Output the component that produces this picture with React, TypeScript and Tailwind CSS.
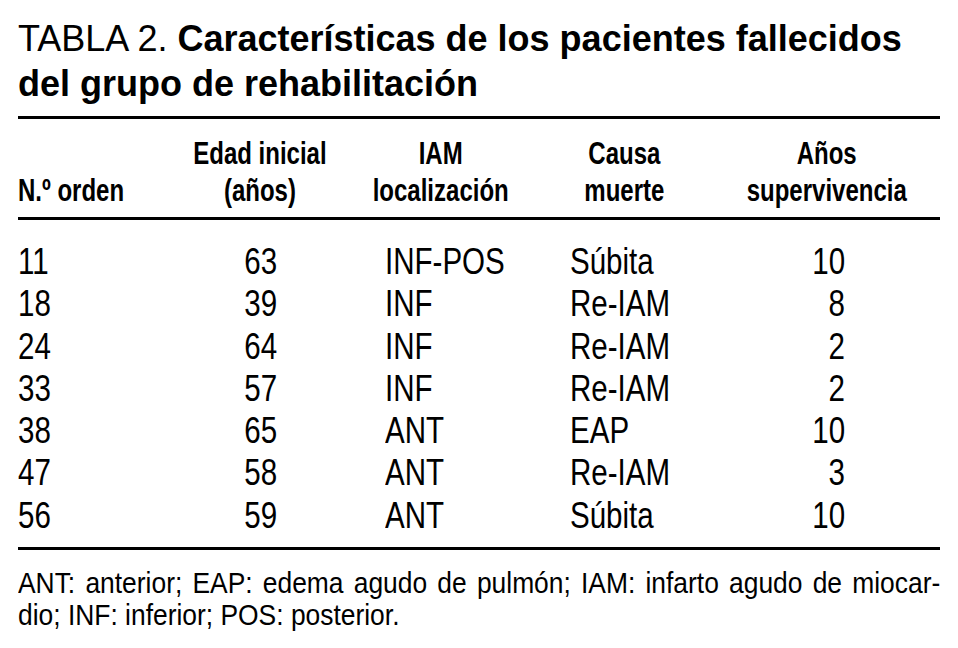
import React from 'react'

interface Row {
  orden: string
  edad: string
  iam: string
  causa: string
  anos: string
}

const rows: Row[] = [
  { orden: '11', edad: '63', iam: 'INF-POS', causa: 'Súbita', anos: '10' },
  { orden: '18', edad: '39', iam: 'INF', causa: 'Re-IAM', anos: '8' },
  { orden: '24', edad: '64', iam: 'INF', causa: 'Re-IAM', anos: '2' },
  { orden: '33', edad: '57', iam: 'INF', causa: 'Re-IAM', anos: '2' },
  { orden: '38', edad: '65', iam: 'ANT', causa: 'EAP', anos: '10' },
  { orden: '47', edad: '58', iam: 'ANT', causa: 'Re-IAM', anos: '3' },
  { orden: '56', edad: '59', iam: 'ANT', causa: 'Súbita', anos: '10' },
]

// condensed look: Liberation Sans squeezed horizontally
const dataTxt = 'inline-block whitespace-nowrap scale-x-[0.82]'
const headTxt = 'w-max text-center whitespace-nowrap origin-center scale-x-[0.75]'

const HeadCell: React.FC<{ className: string; children: React.ReactNode }> = ({ className, children }) => (
  <div className={`flex justify-center ${className}`}>
    <div className={headTxt}>{children}</div>
  </div>
)

const App: React.FC = () => {
  return (
    <div className="w-[958px] h-[648px] bg-white text-black px-[18px] pt-[16px] overflow-hidden font-['Liberation_Sans',Arial,sans-serif]">
      {/* Title */}
      <h1 className="text-[36px] leading-[45px] font-normal">
        TABLA 2. <span className="font-bold">Características de los pacientes fallecidos del grupo de rehabilitación</span>
      </h1>

      <div className="mt-[10px] w-[922px] border-t-[3px] border-black" />

      {/* Header */}
      <div className="font-bold text-[32px] leading-[37px] flex items-end pt-[16px] pb-[8px]">
        <div className="w-[175px]">
          <div className="w-max whitespace-nowrap origin-left scale-x-[0.75]">N.º orden</div>
        </div>
        <HeadCell className="w-[134px]">
          Edad inicial
          <br />
          (años)
        </HeadCell>
        <HeadCell className="ml-[58px] w-[112px]">
          IAM
          <br />
          localización
        </HeadCell>
        <HeadCell className="ml-[73px] w-[108px]">
          Causa
          <br />
          muerte
        </HeadCell>
        <HeadCell className="ml-[70px] w-[158px]">
          Años
          <br />
          supervivencia
        </HeadCell>
      </div>

      <div className="w-[922px] border-t-[3px] border-black" />

      {/* Body */}
      <div className="text-[36px] leading-[42.3px] pt-[21px] pb-[10px]">
        {rows.map((r) => (
          <div key={r.orden} className="flex">
            <div className="w-[175px]">
              <span className={`${dataTxt} origin-left`}>{r.orden}</span>
            </div>
            <div className="w-[134px] text-right pr-[50px]">
              <span className={`${dataTxt} origin-right`}>{r.edad}</span>
            </div>
            <div className="ml-[58px] w-[112px]">
              <span className={`${dataTxt} origin-left`}>{r.iam}</span>
            </div>
            <div className="ml-[73px] w-[108px]">
              <span className={`${dataTxt} origin-left`}>{r.causa}</span>
            </div>
            <div className="ml-[70px] w-[158px] text-right pr-[61px]">
              <span className={`${dataTxt} origin-right`}>{r.anos}</span>
            </div>
          </div>
        ))}
      </div>

      <div className="w-[922px] border-t-[3px] border-black" />

      {/* Footnote */}
      <p className="w-[1048px] origin-left scale-x-[0.88] text-[30px] leading-[32px] pt-[17px] text-justify">
        ANT: anterior; EAP: edema agudo de pulmón; IAM: infarto agudo de miocar-dio; INF: inferior; POS: posterior.
      </p>
    </div>
  )
}

export default App
